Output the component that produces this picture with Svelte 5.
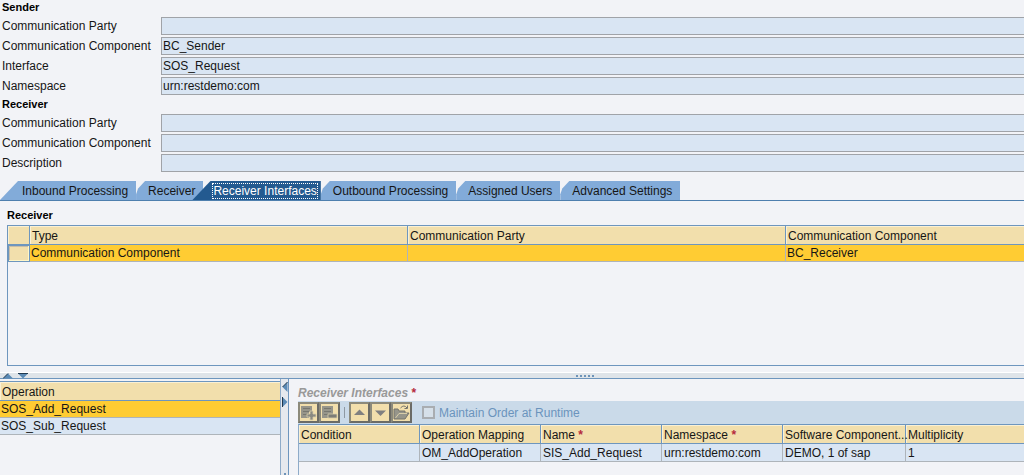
<script lang="ts">
  const sections = [
    {
      title: 'Sender',
      fields: [
        { label: 'Communication Party', value: '' },
        { label: 'Communication Component', value: 'BC_Sender' },
        { label: 'Interface', value: 'SOS_Request' },
        { label: 'Namespace', value: 'urn:restdemo:com' }
      ]
    },
    {
      title: 'Receiver',
      fields: [
        { label: 'Communication Party', value: '' },
        { label: 'Communication Component', value: '' },
        { label: 'Description', value: '' }
      ]
    }
  ];

  const tabs = [
    'Inbound Processing',
    'Receiver',
    'Receiver Interfaces',
    'Outbound Processing',
    'Assigned Users',
    'Advanced Settings'
  ];

  const columns = [
    { name: 'Condition', required: false },
    { name: 'Operation Mapping', required: false },
    { name: 'Name', required: true },
    { name: 'Namespace', required: true },
    { name: 'Software Component...', required: false },
    { name: 'Multiplicity', required: false }
  ];
  const mapping = ['', 'OM_AddOperation', 'SIS_Add_Request', 'urn:restdemo:com', 'DEMO, 1 of sap', '1'];
  const operations = ['SOS_Add_Request', 'SOS_Sub_Request'];

  let activeTab = $state('Receiver Interfaces');
  let selected = $state('SOS_Add_Request');
</script>

<main>
  {#each sections as section, s}
    <section class="fields">
      <h2>{section.title}</h2>
      {#each section.fields as field, f}
        <div class="field">
          <label for="field-{s}-{f}">{field.label}</label>
          <input id="field-{s}-{f}" type="text" value={field.value} readonly />
        </div>
      {/each}
    </section>
  {/each}

  <div class="tabs" role="tablist">
    {#each tabs as tab}
      <button
        class="tab"
        class:active={activeTab === tab}
        role="tab"
        aria-selected={activeTab === tab}
        onclick={() => (activeTab = tab)}
      >
        <span>{tab}</span>
      </button>
    {/each}
  </div>

  <section class="receiver">
    <h2>Receiver</h2>
    <div class="table-frame">
      <table>
        <colgroup>
          <col class="pick" />
          <col class="wide" />
          <col class="wide" />
          <col />
        </colgroup>
        <thead>
          <tr>
            <th></th>
            <th>Type</th>
            <th>Communication Party</th>
            <th>Communication Component</th>
          </tr>
        </thead>
        <tbody>
          <tr class="selected">
            <td class="row-head"></td>
            <td>Communication Component</td>
            <td></td>
            <td>BC_Receiver</td>
          </tr>
        </tbody>
      </table>
    </div>
  </section>

  <div class="split-bar">
    <svg class="collapse" width="26" height="6" viewBox="0 0 26 6">
      <path d="M0 5.500L5 0.500L10 5.500z" fill="#5b8ab5" />
      <path d="M0 5.500L5 0.500" stroke="#20384f" />
      <path d="M15 0.500H25L20 5.500z" fill="#5b8ab5" />
      <path d="M15 0.500H25" stroke="#20384f" />
    </svg>
    <svg class="grip" width="18" height="2" viewBox="0 0 18 2">
      <path d="M0 1H18" stroke="#6d93b8" stroke-width="2" stroke-dasharray="2 2" />
    </svg>
  </div>

  <div class="lower">
    <section class="operations">
      <table>
        <thead>
          <tr><th>Operation</th></tr>
        </thead>
        <tbody>
          {#each operations as operation}
            <tr class:selected={selected === operation} onclick={() => (selected = operation)}>
              <td>{operation}</td>
            </tr>
          {/each}
        </tbody>
      </table>
    </section>

    <div class="side-bar">
      <svg width="6" height="26" viewBox="0 0 6 26">
        <path d="M5.500 0L0.500 5L5.500 10z" fill="#5b8ab5" />
        <path d="M5.500 0L0.500 5" stroke="#20384f" />
        <path d="M0.500 15V25L5.500 20z" fill="#5b8ab5" />
        <path d="M0.500 15V25" stroke="#20384f" />
      </svg>
      <svg width="2" height="2" viewBox="0 0 2 2">
        <path d="M0 0H2V2H0z" fill="#6d93b8" />
      </svg>
    </div>

    <section class="interfaces">
      <h2>Receiver Interfaces <b class="star">*</b></h2>
      <div class="toolbar">
        <div class="group">
          <button aria-label="Add row">
            <svg width="17" height="17" viewBox="0 0 17 17">
              <path d="M1 2H12V8H9V14H1z" fill="#96958a" />
              <path d="M3 4.500H10M3 7.500H9M3 10.500H8" stroke="#77776f" />
              <path d="M10 7H13V10H16V13H13V16H10V13H7V10H10z" fill="#8a8a82" stroke="#d8cda8" stroke-width="0.800" />
            </svg>
          </button>
          <button aria-label="Delete row">
            <svg width="17" height="17" viewBox="0 0 17 17">
              <path d="M1 2H12V14H1z" fill="#96958a" />
              <path d="M3 4.500H10M3 7.500H10M3 10.500H7" stroke="#77776f" />
              <path d="M7 10H16V14H7z" fill="#7d7d77" stroke="#d8cda8" stroke-width="0.800" />
            </svg>
          </button>
        </div>
        <span class="divider"></span>
        <div class="group">
          <button aria-label="Move up">
            <svg width="17" height="17" viewBox="0 0 17 17">
              <path d="M3 11L8.500 5.500L14 11z" fill="#808080" />
            </svg>
          </button>
          <button aria-label="Move down">
            <svg width="17" height="17" viewBox="0 0 17 17">
              <path d="M3 6.500L8.500 12L14 6.500z" fill="#808080" />
            </svg>
          </button>
          <button aria-label="Open">
            <svg width="17" height="17" viewBox="0 0 17 17">
              <path d="M1 15V5H5L6 7H12V9H16L12 15z" fill="#96958a" stroke="#74746c" />
              <path d="M2.500 14L6 9.500H14" fill="none" stroke="#d8cda8" />
              <path d="M7.500 4Q11 0 14 4M11.500 4.500H14.500V1.500" fill="none" stroke="#74746c" />
            </svg>
          </button>
        </div>
        <label class="order"><input type="checkbox" disabled />Maintain Order at Runtime</label>
      </div>
      <div class="grid-frame">
        <table>
          <thead>
            <tr>
              {#each columns as column}
                <th>{column.name}{#if column.required}&nbsp;<b class="star">*</b>{/if}</th>
              {/each}
            </tr>
          </thead>
          <tbody>
            <tr>
              {#each mapping as value}
                <td>{value}</td>
              {/each}
            </tr>
          </tbody>
        </table>
      </div>
    </section>
  </div>
</main>

<style>
  :global(body) {
    background: #f2f3f7;
    overflow: hidden;
  }

  main {
    min-height: 100vh;
    display: flex;
    flex-direction: column;
    font: 12px/16px 'Liberation Sans', Arial, sans-serif;
    color: #161616;
  }

  button,
  input {
    font: inherit;
    color: inherit;
    margin: 0;
    border-radius: 0;
    box-sizing: border-box;
  }

  h2 {
    margin: 0;
    font-size: 11px;
    line-height: 16px;
    color: #000;
  }

  .fields h2 {
    padding: 0 0 2px 2px;
    line-height: 14px;
  }

  .fields:nth-child(2) {
    padding-top: 1px;
  }

  .field {
    display: grid;
    grid-template-columns: 159px 1fr;
    height: 20px;
    padding-left: 2px;
    align-items: center;
  }

  .field input {
    width: 100%;
    height: 18px;
    padding: 0 1px;
    border: 1px solid #a0a3a8;
    border-right: 0;
    background: #d9e5f3;
    outline: none;
  }

  .tabs {
    display: flex;
    height: 19px;
    margin-top: 8px;
    border-bottom: 1px solid #4e7fae;
  }

  .tab {
    height: 19px;
    padding: 0 8px 0 12px;
    border: 0;
    background: #82abd9;
    clip-path: polygon(0 100%, 0 70%, 2px 40%, 9px 0, 100% 0, 100% 100%);
    white-space: nowrap;
    line-height: 19px;
  }

  .tab:first-child {
    padding-left: 22px;
    clip-path: polygon(0 100%, 18px 0, 100% 0, 100% 100%);
  }

  .tab.active {
    margin-left: -11px;
    padding: 0 3px 0 20px;
    background: #235a90;
    color: #fff;
    clip-path: polygon(0 100%, 18px 0, 100% 0, 100% 100%);
  }

  .tab span {
    display: block;
    line-height: 16px;
  }

  .tab.active span {
    outline: 1px dotted #fff;
    outline-offset: -1px;
    padding: 0 1px;
  }

  .receiver {
    padding: 6px 0 6px 7px;
  }

  .receiver h2 {
    padding-bottom: 2px;
  }

  .table-frame {
    height: 139px;
    border: 1px solid #6e96be;
    border-right: 0;
  }

  table {
    width: 100%;
    border-collapse: separate;
    border-spacing: 0;
    table-layout: fixed;
  }

  th,
  td {
    box-sizing: border-box;
    height: 17px;
    padding: 0 2px;
    line-height: 16px;
    text-align: left;
    font-weight: normal;
    white-space: nowrap;
    border-right: 1px solid #aeb4ba;
    border-bottom: 1px solid #aeb4ba;
  }

  td {
    background: #d9e5f3;
  }

  th {
    height: 19px;
    padding: 2px 0 0 2px;
    background: #f2dfac;
    border-right-color: #6e96be;
    border-bottom-color: #6e96be;
    box-shadow: inset 1px 1px #faf0d4;
  }

  .selected td {
    background: #fc3;
  }

  .receiver td {
    padding-left: 1px;
  }

  .receiver .row-head {
    background: #f2dfac;
    border: 1px solid #6e96be;
    box-shadow: inset -1px -1px #fff6c8, inset 1px 1px #c9bda6;
  }

  th:last-child,
  td:last-child {
    border-right: 0;
  }

  .pick {
    width: 22px;
  }

  .wide {
    width: 378px;
  }

  .split-bar {
    display: grid;
    grid-template-columns: 1fr auto 1fr;
    align-items: center;
    height: 5px;
    border-top: 1px solid #fff;
    border-bottom: 1px solid #6e96be;
    background: #dfe4e9;
  }

  .collapse {
    margin-left: 3px;
  }

  .grip {
    margin-left: 146px;
  }

  .lower {
    flex: 1;
    display: flex;
  }

  .operations {
    width: 281px;
    padding-top: 2px;
    border-right: 1px solid #8eabc9;
    box-sizing: border-box;
  }

  .operations table {
    border-top: 1px solid #6e96be;
  }

  .operations td {
    padding-left: 1px;
  }

  .side-bar {
    width: 7px;
    display: flex;
    flex-direction: column;
    align-items: center;
    justify-content: space-between;
    padding-top: 3px;
    background: #e6e9ee;
    border-right: 1px solid #6e96be;
  }

  .interfaces {
    flex: 1;
    min-width: 0;
    display: flex;
    flex-direction: column;
    padding: 6px 0 0 9px;
  }

  .interfaces h2 {
    font-size: 12px;
    font-style: italic;
    color: #999;
  }

  .star {
    font-style: normal;
    font-weight: bold;
    color: #b52a3c;
  }

  .toolbar {
    display: flex;
    align-items: center;
    height: 23px;
    background: #cadae9;
  }

  .group {
    display: flex;
  }

  .toolbar button {
    width: 21px;
    height: 21px;
    padding: 0;
    display: flex;
    align-items: center;
    justify-content: center;
    background: #f2dfac;
    border: 2px solid #6b6b66;
    border-top-color: #8c8a7b;
    border-left-color: #8c8a7b;
  }

  .divider {
    width: 1px;
    height: 11px;
    margin: 0 4px;
    background: #8e99a3;
  }

  .order {
    display: flex;
    align-items: center;
    margin-left: 10px;
    color: #6b94bd;
  }

  .order input {
    appearance: none;
    width: 13px;
    height: 13px;
    margin-right: 4px;
    border: 2px solid #a9adb1;
    background: #d6e0e9;
  }

  .grid-frame {
    flex: 1;
    border-top: 1px solid #6e96be;
    border-left: 1px solid #8eabc9;
  }

  .grid-frame th {
    width: 121px;
  }

  .grid-frame th:nth-child(5) {
    width: 123px;
  }

  .grid-frame td {
    height: 18px;
    padding-top: 1px;
  }

  .grid-frame th:last-child {
    width: auto;
  }
</style>
